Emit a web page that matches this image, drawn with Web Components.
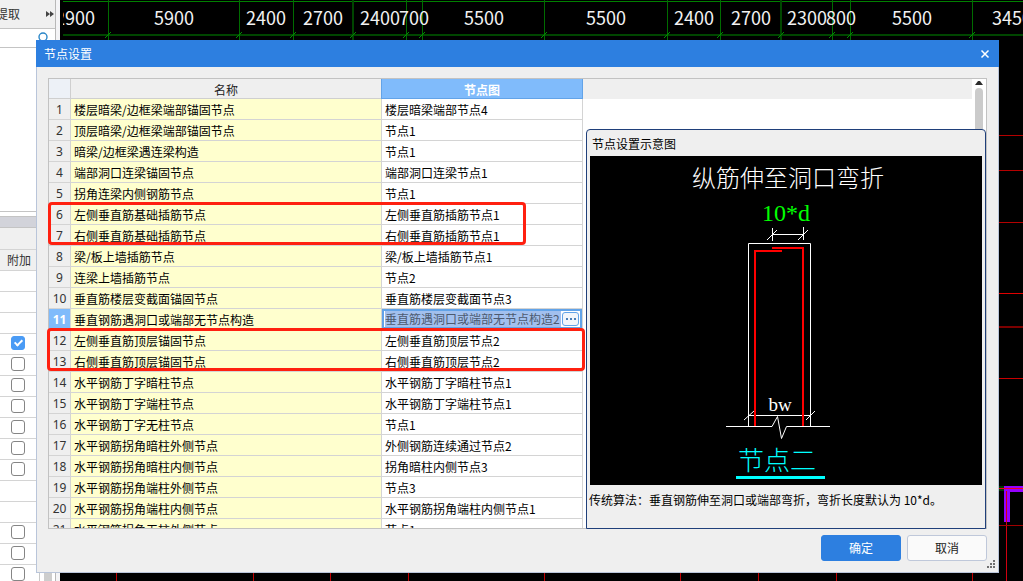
<!DOCTYPE html>
<html lang="zh-CN">
<head>
<meta charset="utf-8">
<title>节点设置</title>
<style>
  html, body { height: 100%; margin: 0; overflow: hidden; }
  body { font: 12px/20px "Noto Sans CJK SC", "Noto Sans", sans-serif; color: #000; background: #000; }
</style>
</head>
<body>
<cad-workspace>
  <component-panel slot="side"></component-panel>
  <drawing-canvas slot="canvas"></drawing-canvas>
  <settings-dialog slot="dialog" heading="节点设置">
    <node-grid slot="grid"></node-grid>
    <node-preview slot="preview" heading="节点设置示意图">传统算法：垂直钢筋伸至洞口或端部弯折，弯折长度默认为 10*d。</node-preview>
  </settings-dialog>
</cad-workspace>

<script>
function define(name, setup) {
  customElements.define(name, class extends HTMLElement {
    constructor() { super(); this.attachShadow({ mode: 'open' }); }
    connectedCallback() { this.shadowRoot.innerHTML = setup(this); }
  });
}

define('cad-workspace', () => `
  <style>
    :host { display: flex; height: 100%; position: relative; overflow: hidden; }
    ::slotted([slot=side]) { flex: none; width: 60px; }
    ::slotted([slot=canvas]) { flex: 1; min-width: 0; }
    ::slotted([slot=dialog]) { position: absolute; inset: 40px 24px 8px 36px; }
  </style>
  <slot name="side"></slot><slot name="canvas"></slot><slot name="dialog"></slot>`);

/* Left tool panel with the list of tick boxes */
const ticks = ['', '', '', 'on', 'off', 'off', 'off', 'off', 'off', 'off', '', '', 'off', 'off', 'off'];
define('component-panel', () => `
  <style>
    :host { display: block; background: #f4f4f6; overflow: hidden; }
    * { box-sizing: border-box; }
    .col { width: 56px; height: 100%; background: #fff; border-right: 1px solid #b8b8b8; display: flex; flex-direction: column; }
    .head { flex: none; height: 29px; background: #f0f0f0; border-bottom: 1px solid #c4c4c4; display: flex; align-items: center; justify-content: space-between; color: #333; }
    .head span { margin-left: -4px; }
    .head svg { margin-right: 1px; }
    .find { flex: none; height: 19px; border-bottom: 1px solid #c4c4c4; display: flex; justify-content: flex-end; padding: 3px 6px 0 0; overflow: hidden; }
    .blank { flex: none; height: 164px; border-bottom: 1px solid #c4c4c4; }
    .band { flex: none; height: 12px; margin-top: 4px; background: #d2d3da; border-top: 1px solid #c4c4c4; border-bottom: 1px solid #c4c4c4; }
    .list { flex: 1; min-height: 0; display: flex; overflow: hidden; }
    .rows { width: 40px; border-right: 1px solid #c8c8c8; }
    .row { height: 21px; border-bottom: 1px solid #d4d4d4; display: flex; align-items: center; padding: 0 0 2px 11px; }
    .row.h { background: #f0f0f0; padding: 0 0 0 7px; color: #333; white-space: nowrap; }
    .row.first { height: 22px; }
    .bar { flex: 1; padding: 0 3px 0 4px; background: #fff; }
    .bar i { display: block; height: 100%; background: #cdcdcd; }
    input { appearance: none; margin: 0; width: 14px; height: 14px; border: 1px solid #858585; border-radius: 3px; background: #fff; }
    input:checked { border-color: #4a9bf5; background: #4a9bf5; position: relative; }
    input:checked::after { content: ""; position: absolute; left: 4px; top: 1px; width: 3px; height: 6px; border: solid #fff; border-width: 0 2px 2px 0; transform: rotate(45deg); }
  </style>
  <div class="col">
    <div class="head"><span>提取</span><svg width="8" height="6" viewBox="0 0 8 6"><path d="M0 0 4 3 0 6ZM4 0 8 3 4 6Z" fill="#444"/></svg></div>
    <div class="find"><svg width="12" height="14" viewBox="0 0 12 14" fill="none" stroke="#2a86c8"><circle cx="6" cy="5" r="4" stroke-width="1.4"/><path d="M8.5 8.5 11 12" stroke-width="1.6"/></svg></div>
    <div class="blank"></div>
    <div class="band"></div>
    <div class="list">
      <div class="rows">
        <div class="row h first"></div>
        <div class="row h">附加</div>
        ${ticks.map((t, i) => `<div class="row">${t ? `<input type="checkbox" aria-label="附加 ${i + 1}"${t === 'on' ? ' checked' : ''}>` : ''}</div>`).join('')}
      </div>
      <div class="bar"><i></i></div>
    </div>
  </div>`);

/* Drawing canvas: grid axes with their dimensions, and red construction lines */
const axes = [48, 179, 233, 293, 346, 362, 484, 607, 660, 721, 772, 790, 912];
const wide = [293, 721];
const dims = [[15, 2900], [114, 5900], [206, 2400], [263, 2700], [320, 2400], [354, 700], [424, 5500], [546, 5500], [634, 2400], [691, 2700], [747, 2300], [781, 800], [852, 5500], [952, 3450]];
define('drawing-canvas', () => `
  <style>
    :host { display: block; background: #000; }
    svg { display: block; width: 100%; height: 100%; }
    text { font-size: 18px; fill: #f2f2f2; text-anchor: middle; }
  </style>
  <svg shape-rendering="crispEdges">
    <defs><clipPath id="c"><rect x="3" y="0" width="100%" height="40"/></clipPath></defs>
    <g clip-path="url(#c)">
      <rect x="0" y="1" width="100%" height="1" fill="#008000"/>
      <rect x="0" y="34" width="100%" height="2" fill="#004600"/>
      ${axes.map(x => `<rect x="${x - (wide.includes(x) ? 1 : 0)}" y="0" width="${wide.includes(x) ? 2 : 1}" height="40" fill="${wide.includes(x) ? '#004600' : '#006c00'}"/>
        <path d="M${x - 3} 38 ${x + 3} 32" stroke="#009000" shape-rendering="auto"/>`).join('')}
      ${dims.map(([x, t]) => `<text x="${x}" y="25">${t}</text>`).join('')}
    </g>
    ${[135, 170, 222].map(y => `<rect x="936" y="${y}" width="100%" height="1" fill="#b40000"/>`).join('')}
    <rect x="936" y="293" width="100%" height="1" fill="#e00000"/>
    <rect x="936" y="326" width="100%" height="2" fill="#7c0000"/>
    <rect x="936" y="378" width="100%" height="1" fill="#c80000"/>
    <rect x="936" y="486" width="8" height="5" fill="#003c00"/>
    <path d="M944 486H2000V492H950V522H944Z" fill="#9400ff"/>
    <rect x="936" y="488" width="100%" height="1" fill="#f00020"/>
    <rect x="946" y="491" width="1" height="100%" fill="#d00010"/>
    <rect x="936" y="525" width="100%" height="1" fill="#a00000"/>
    ${[56, 193, 270, 348, 484, 620, 698, 776, 912].map(x => `<rect x="${x}" y="560" width="1" height="100%" fill="#c00000"/>`).join('')}
  </svg>`);

/* Window frame of the dialog */
define('settings-dialog', el => `
  <style>
    :host { display: flex; flex-direction: column; background: #efefef; box-sizing: border-box; }
    * { box-sizing: border-box; }
    header { flex: none; height: 27px; background: #2d7fe0; color: #fff; display: flex; align-items: center; justify-content: space-between; padding: 0 9px 0 8px; }
    h1 { margin: 0; font: inherit; }
    button { font: inherit; cursor: pointer; }
    .close { border: 0; background: none; padding: 0; width: 10px; height: 10px; display: flex; }
    .body { flex: 1; min-height: 0; display: flex; flex-direction: column; border: 1px solid #b9c5da; border-top: 0; padding: 11px 11px 0; }
    .frame { flex: 1; min-height: 0; border: 1px solid #c2c2c2; background: #fff; display: flex; }
    .right { flex: 1; min-width: 0; display: flex; flex-direction: column; }
    .top { flex: none; height: 50px; display: flex; }
    .strip { flex: 1; height: 20px; background: #efefef; }
    .bar { width: 14px; padding: 2px 3px 0; display: flex; flex-direction: column; gap: 3px; }
    .bar i { flex: 1; width: 8px; background: #cbcbcb; border-radius: 4px 4px 0 0; }
    ::slotted([slot=grid]) { flex: none; }
    ::slotted([slot=preview]) { flex: 1; min-height: 0; margin: 0 0 -1px 3px; }
    footer { flex: none; display: flex; justify-content: flex-end; gap: 6px; padding: 6px 0 11px; position: relative; }
    footer button { width: 80px; height: 26px; padding: 0; border-radius: 3px; border: 1px solid #2d7fe0; background: #2d7fe0; color: #fff; }
    footer button.no { background: #fafafa; border-color: #bfc8da; color: #222; }
    .grip { position: absolute; right: -9px; bottom: 3px; }
  </style>
  <header><h1>${el.getAttribute('heading')}</h1>
    <button class="close" aria-label="关闭"><svg width="10" height="10" viewBox="0 0 10 10"><path d="M1.5 1.5 8.5 8.5M8.5 1.5 1.5 8.5" stroke="#fff" stroke-width="1.5"/></svg></button></header>
  <div class="body">
    <div class="frame">
      <slot name="grid"></slot>
      <div class="right">
        <div class="top"><div class="strip"></div><div class="bar"><svg width="8" height="4" viewBox="0 0 8 4"><path d="M0 4 3 0H5L8 4Z" fill="#2c2c2c"/></svg><i></i></div></div>
        <slot name="preview"></slot>
      </div>
    </div>
    <footer><button>确定</button><button class="no">取消</button>
      <svg class="grip" width="9" height="9" viewBox="0 0 9 9" fill="#707070"><path d="M6 0h2v2H6zM3 3h2v2H3zM6 3h2v2H6zM0 6h2v2H0zM3 6h2v2H3zM6 6h2v2H6z"/></svg>
    </footer>
  </div>`);

/* Table of nodes */
const rows = [
  ['楼层暗梁/边框梁端部锚固节点', '楼层暗梁端部节点4'],
  ['顶层暗梁/边框梁端部锚固节点', '节点1'],
  ['暗梁/边框梁遇连梁构造', '节点1'],
  ['端部洞口连梁锚固节点', '端部洞口连梁节点1'],
  ['拐角连梁内侧钢筋节点', '节点1'],
  ['左侧垂直筋基础插筋节点', '左侧垂直筋插筋节点1'],
  ['右侧垂直筋基础插筋节点', '右侧垂直筋插筋节点1'],
  ['梁/板上墙插筋节点', '梁/板上墙插筋节点1'],
  ['连梁上墙插筋节点', '节点2'],
  ['垂直筋楼层变截面锚固节点', '垂直筋楼层变截面节点3'],
  ['垂直钢筋遇洞口或端部无节点构造', '垂直筋遇洞口或端部无节点构造2'],
  ['左侧垂直筋顶层锚固节点', '左侧垂直筋顶层节点2'],
  ['右侧垂直筋顶层锚固节点', '右侧垂直筋顶层节点2'],
  ['水平钢筋丁字暗柱节点', '水平钢筋丁字暗柱节点1'],
  ['水平钢筋丁字端柱节点', '水平钢筋丁字端柱节点1'],
  ['水平钢筋丁字无柱节点', '节点1'],
  ['水平钢筋拐角暗柱外侧节点', '外侧钢筋连续通过节点2'],
  ['水平钢筋拐角暗柱内侧节点', '拐角暗柱内侧节点3'],
  ['水平钢筋拐角端柱外侧节点', '节点3'],
  ['水平钢筋拐角端柱内侧节点', '水平钢筋拐角端柱内侧节点1'],
  ['水平钢筋拐角无柱外侧节点', '节点1']
];
const active = 10;
define('node-grid', () => `
  <style>
    :host { display: block; width: 534px; position: relative; }
    * { box-sizing: border-box; }
    .view { height: 100%; overflow: hidden; }
    table { width: 100%; table-layout: fixed; border-collapse: separate; border-spacing: 0; }
    th, td { height: 21px; padding: 2px 0 0; border: solid #d4d4d4; border-width: 0 1px 1px 0; line-height: 18px; font-weight: 400; text-align: left; white-space: nowrap; }
    thead th { height: 20px; line-height: 17px; background: #efefef; text-align: center; color: #222; border-color: #cfcfcf; }
    thead th:first-child { background: #edf1f7; }
    thead th.sel { background: #80bbfb; color: #fff; font-weight: 700; border-color: #62a3e8; box-shadow: -1px 0 #62a3e8; }
    tbody th { background: #efefef; text-align: center; color: #333; font-family: "Noto Sans", sans-serif; }
    tbody th.sel { background: #80bbfb; color: #fff; font-weight: 700; }
    td { padding-left: 3px; background: #fff; }
    td.name { background: #ffffce; }
    td.edit { padding: 0; }
    .editor { display: flex; align-items: center; gap: 1px; height: 20px; border: 2px solid #62a3e8; padding: 0 1px; }
    input { flex: 1; min-width: 0; height: 16px; border: 0; padding: 0; margin: 0; font: inherit; background: #a2c0ee; color: #4c5a70; }
    button { flex: none; width: 17px; height: 14px; padding: 0; border: 1px solid #62a3e8; border-radius: 3px; background: #f2f6fb; display: flex; align-items: center; justify-content: center; }
    .mark { position: absolute; height: 43px; border: 3px solid #ff2010; border-radius: 4px; pointer-events: none; }
    .m1 { left: -1px; top: 123px; width: 478px; }
    .m2 { left: -2px; top: 249px; width: 538px; }
  </style>
  <div class="view"><table>
    <colgroup><col style="width:22px"><col><col style="width:201px"></colgroup>
    <thead><tr><th></th><th>名称</th><th class="sel">节点图</th></tr></thead>
    <tbody>${rows.map(([n, v], i) => `<tr><th${i === active ? ' class="sel"' : ''}>${i + 1}</th><td class="name">${n}</td>${
      i === active
        ? `<td class="edit"><div class="editor"><input value="${v}" aria-label="${n}"><button aria-label="选择节点图"><svg width="10" height="2" fill="#4a7fb8"><path d="M0 0h2v2H0zM4 0h2v2H4zM8 0h2v2H8z"/></svg></button></div></td>`
        : `<td>${v}</td>`}</tr>`).join('')}</tbody>
  </table></div>
  <div class="mark m1"></div><div class="mark m2"></div>`);

/* Schematic of the selected node */
define('node-preview', el => `
  <style>
    :host { display: flex; flex-direction: column; background: #efefef; border: 1px solid #1f3f7a; border-radius: 4px 4px 0 0; box-sizing: border-box; }
    h2 { flex: none; margin: 0; font: inherit; line-height: 24px; padding: 2px 5px 0; }
    svg { flex: 1; min-height: 0; margin: 0 3px; background: #000; }
    p { flex: none; margin: 0; height: 38px; padding: 5px 2px 0; white-space: nowrap; }
    text { font-size: 24px; font-weight: 300; text-anchor: middle; font-family: "Liberation Serif", "Noto Sans CJK SC", serif; }
  </style>
  <h2>${el.getAttribute('heading')}</h2>
  <svg viewBox="0 0 392 329" role="img" aria-label="节点二">
    <text x="198" y="31" fill="#fff">纵筋伸至洞口弯折</text>
    <text x="196" y="65" fill="#0f0">10*d</text>
    <g fill="none" stroke="#fff">
      <path d="M182.500 72V85M213.500 71V84M182 78.500H214M177 84 187 74M208 84 218 74"/>
      <path d="M158.500 270V87.500H220.500V270M136 270.500H182L187.500 260.500 191.500 282.500 196.500 270.500H240M158 259.500H220M154 264 164 255M216 264 225 255"/>
    </g>
    <path d="M165 270V95H192M182 92H213V270" fill="none" stroke="#f00" stroke-width="2"/>
    <text x="190" y="255" fill="#fff" style="font-size:19px">bw</text>
    <text x="187" y="314" fill="#0ff" style="font-size:26px">节点二</text>
    <path d="M146 321.500H235" stroke="#0ff" stroke-width="3"/>
  </svg>
  <p><slot></slot></p>`);
</script>
</body>
</html>
